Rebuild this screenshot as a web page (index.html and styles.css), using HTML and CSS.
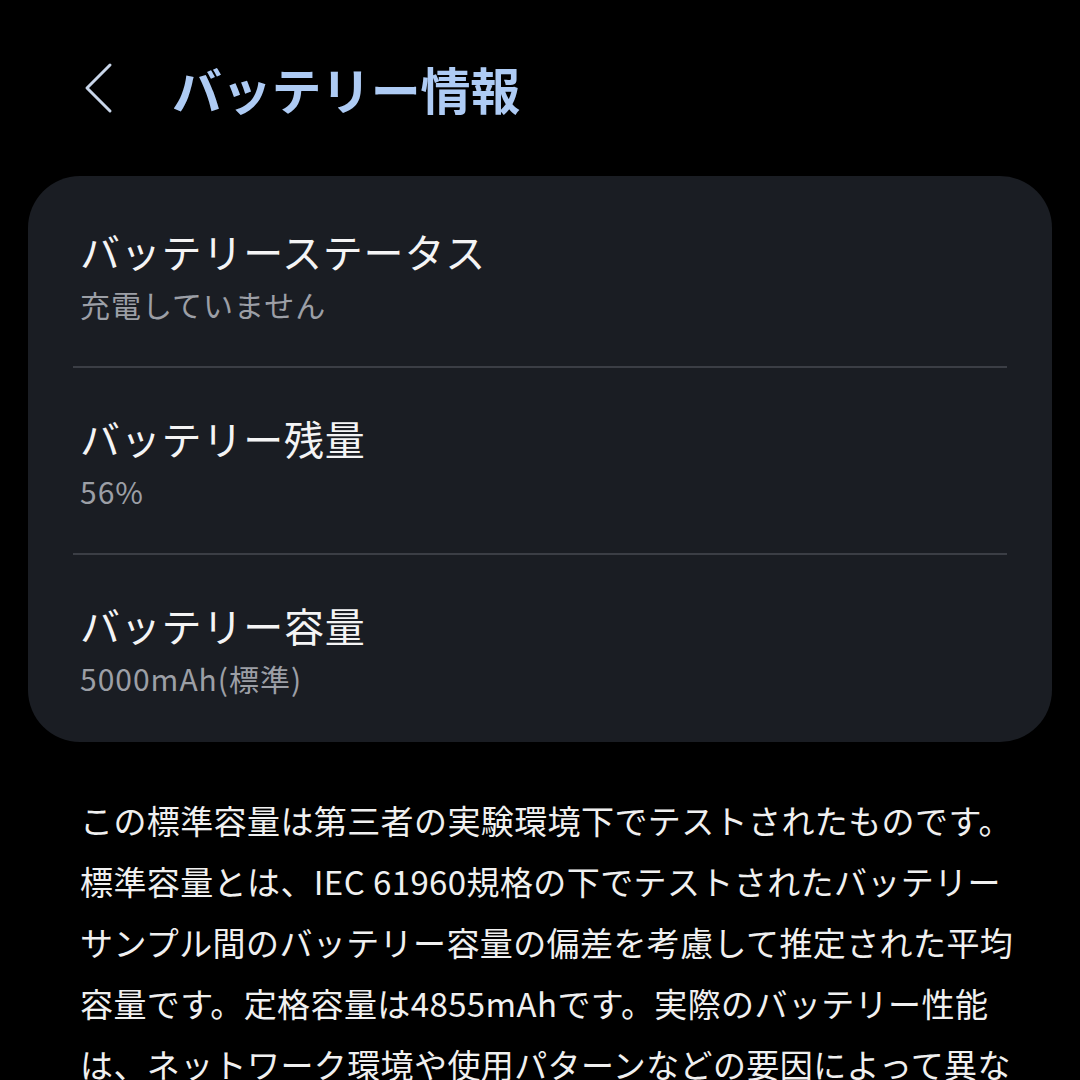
FILE: index.html
```html
<!DOCTYPE html>
<html lang="ja">
<head>
<meta charset="utf-8">
<title>バッテリー情報</title>
<link rel="stylesheet" href="styles.css">
</head>
<body>
<div class="screen">
  <header class="header">
    <svg class="back" viewBox="0 0 30 52" width="30" height="52" aria-hidden="true">
      <path d="M27 3 L4 26 L27 49" fill="none" stroke="#c9d6ea" stroke-width="3" stroke-linecap="round" stroke-linejoin="round"/>
    </svg>
    <h1 class="title">バッテリー情報</h1>
  </header>

  <section class="card">
    <div class="row">
      <div class="row-title">バッテリーステータス</div>
      <div class="row-sub">充電していません</div>
    </div>
    <div class="divider"></div>
    <div class="row">
      <div class="row-title">バッテリー残量</div>
      <div class="row-sub">56%</div>
    </div>
    <div class="divider"></div>
    <div class="row">
      <div class="row-title">バッテリー容量</div>
      <div class="row-sub">5000mAh(標準)</div>
    </div>
  </section>

  <p class="note">この標準容量は第三者の実験環境下でテストされたものです。<br>標準容量とは、IEC 61960規格の下でテストされたバッテリー<br>サンプル間のバッテリー容量の偏差を考慮して推定された平均<br>容量です。定格容量は4855mAhです。実際のバッテリー性能<br>は、ネットワーク環境や使用パターンなどの要因によって異な</p>
</div>
</body>
</html>
```

FILE: styles.css
```css
html, body {
  margin: 0;
  padding: 0;
  background: #000;
}

body {
  font-family: "Noto Sans CJK JP", "Noto Sans", Roboto, sans-serif;
  color: #f2f2f2;
  width: 1080px;
  height: 1080px;
  overflow: hidden;
}

.screen {
  display: flex;
  flex-direction: column;
}

.header {
  display: flex;
  align-items: center;
  height: 120px;
  padding-top: 28px;
  padding-left: 83px;
}

.back {
  display: block;
  flex: none;
}

.title {
  margin: 0 0 0 59px;
  font-size: 50px;
  font-weight: 600;
  line-height: 60px;
  color: #aecbf4;
  letter-spacing: -0.3px;
}

.card {
  margin: 28px 28px 0 28px;
  background: #1a1d23;
  border-radius: 52px;
  padding: 5px 0 2px 0;
  display: flex;
  flex-direction: column;
}

.row {
  padding: 46px 52px 42px 52px;
  display: flex;
  flex-direction: column;
  gap: 9px;
}

.row-title {
  font-size: 40px;
  line-height: 48px;
  color: #f4f4f5;
  letter-spacing: 0.8px;
}

.row-sub {
  font-size: 30px;
  line-height: 40px;
  color: #9c9fa6;
  letter-spacing: 1px;
}

.divider {
  height: 2px;
  margin: 0 45px;
  background: #3b3e45;
}

.note {
  margin: 48px 0 0 0;
  padding: 0 40px 0 80px;
  font-size: 33px;
  line-height: 61px;
  color: #f0f0f0;
  letter-spacing: 0.4px;
  white-space: nowrap;
}
```
